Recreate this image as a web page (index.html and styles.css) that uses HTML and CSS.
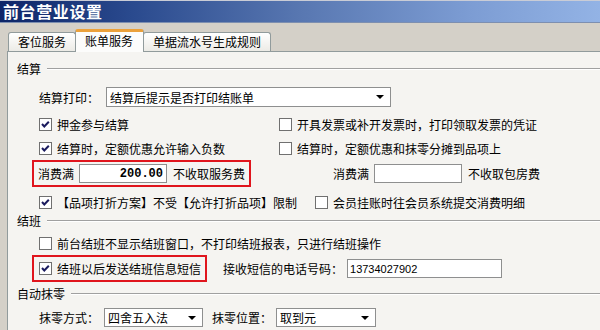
FILE: index.html
```html
<!DOCTYPE html>
<html lang="zh-CN">
<head>
  <meta charset="UTF-8">
  <title>前台营业设置</title>
  <link rel="stylesheet" href="styles.css">
</head>
<body>
  <div class="titlebar">前台营业设置</div>
  <div class="tabstrip">
    <div class="tab">客位服务</div>
    <div class="tab active">账单服务</div>
    <div class="tab">单据流水号生成规则</div>
  </div>

  <div class="panel">
    <!-- 结算 -->
    <div class="group-head head-settle"><span>结算</span></div>
    <div class="row row-print">
      <span>结算打印：</span>
      <div class="select select-print">结算后提示是否打印结账单<span class="arrow"></span></div>
    </div>
    <div class="row row-cb1">
      <label class="check col-left"><span class="box"><svg width="11" height="11" viewBox="0 0 11 11"><polyline points="2,5 4.3,7.5 8.8,2.8" fill="none" stroke="#1b1b5e" stroke-width="2"/></svg></span>押金参与结算</label>
      <label class="check"><span class="box"></span>开具发票或补开发票时，打印领取发票的凭证</label>
    </div>
    <div class="row row-cb2">
      <label class="check col-left"><span class="box"><svg width="11" height="11" viewBox="0 0 11 11"><polyline points="2,5 4.3,7.5 8.8,2.8" fill="none" stroke="#1b1b5e" stroke-width="2"/></svg></span>结算时，定额优惠允许输入负数</label>
      <label class="check"><span class="box"></span>结算时，定额优惠和抹零分摊到品项上</label>
    </div>
    <div class="row row-fee">
      <div class="highlight fee-box">
        <span>消费满</span>
        <div class="input input-fee">200.00</div>
        <span class="after-input">不收取服务费</span>
      </div>
      <span class="room-fee">消费满</span>
      <div class="input input-fee"></div>
      <span class="after-input">不收取包房费</span>
    </div>
    <div class="row row-cb3">
      <label class="check col-wide"><span class="box"><svg width="11" height="11" viewBox="0 0 11 11"><polyline points="2,5 4.3,7.5 8.8,2.8" fill="none" stroke="#1b1b5e" stroke-width="2"/></svg></span>【品项打折方案】不受【允许打折品项】限制</label>
      <label class="check"><span class="box"></span>会员挂账时往会员系统提交消费明细</label>
    </div>

    <!-- 结班 -->
    <div class="group-head head-shift"><span>结班</span></div>
    <div class="row row-cb4">
      <label class="check"><span class="box"></span>前台结班不显示结班窗口，不打印结班报表，只进行结班操作</label>
    </div>
    <div class="row row-sms">
      <div class="highlight sms-box">
        <label class="check"><span class="box"><svg width="11" height="11" viewBox="0 0 11 11"><polyline points="2,5 4.3,7.5 8.8,2.8" fill="none" stroke="#1b1b5e" stroke-width="2"/></svg></span>结班以后发送结班信息短信</label>
      </div>
      <span class="phone-label">接收短信的电话号码：</span>
      <div class="input input-phone">13734027902</div>
    </div>

    <!-- 自动抹零 -->
    <div class="group-head head-round"><span>自动抹零</span></div>
    <div class="row row-round">
      <span>抹零方式：</span>
      <div class="select select-small">四舍五入法<span class="arrow"></span></div>
      <span class="pos-label">抹零位置：</span>
      <div class="select select-small select-pos">取到元<span class="arrow"></span></div>
    </div>
  </div>
</body>
</html>
```

FILE: styles.css
```css
body {
  margin: 0;
  width: 600px;
  height: 330px;
  overflow: hidden;
  background: #d4d0c8;
  font-family: "Noto Sans CJK SC", sans-serif;
  font-size: 12px;
  color: #000;
}

.titlebar {
  height: 23px;
  box-sizing: border-box;
  border-top: 1px solid #c9ccd6;
  border-bottom: 1px solid #7d8fb0;
  background: linear-gradient(to right, #0d2568, #2a4a8e 22%, #5877b1 50%, #7c9cd3 78%, #93b3e5);
  color: #fff;
  font-size: 16px;
  font-weight: bold;
  line-height: 21px;
  padding-left: 3px;
  letter-spacing: 0.6px;
}

.tabstrip {
  height: 28px;
  box-sizing: border-box;
  display: flex;
  align-items: flex-end;
  padding-left: 8px;
}
.tab {
  height: 19px;
  box-sizing: border-box;
  border: 1px solid #919b9c;
  border-bottom: none;
  border-radius: 3px 3px 0 0;
  background: linear-gradient(#ffffff, #ecebe6);
  padding: 0 9px;
  line-height: 18px;
  white-space: nowrap;
}
.tab.active {
  height: 23px;
  margin-bottom: -1px;
  position: relative;
  border-top: 3px solid #eba13b;
  background: #fcfcfb;
  padding: 0 10px 0 9px;
  line-height: 17px;
  margin-left: -1px;
  margin-right: -1px;
}

.panel {
  margin-left: 7px;
  height: 279px;
  box-sizing: border-box;
  border-top: 1px solid #919b9c;
  border-left: 1px solid #919b9c;
  background: #f5f4f1;
  padding-left: 9px;
}

.group-head {
  display: flex;
  align-items: center;
  height: 16px;
}
.group-head::after {
  content: "";
  flex: 1;
  height: 1px;
  margin-left: 6px;
  background: #a0a0a0;
  box-shadow: 0 1px 0 #fff;
}
.head-settle { padding-top: 8px; }
.head-shift { margin-top: 2px; }
.head-round { margin-top: 3px; }

.row {
  display: flex;
  align-items: center;
  height: 16px;
  margin-left: 22px;
  white-space: nowrap;
}
.row-print { height: 20px; margin-top: 11px; }
.row-cb1 { margin-top: 9px; }
.row-cb2 { margin-top: 8px; }
.row-fee { height: 27px; margin-top: 4px; margin-left: 15px; }
.row-cb3 { margin-top: 7px; }
.row-cb4 { margin-top: 7px; }
.row-sms { height: 27px; margin-top: 4px; margin-left: 15px; }
.row-round { height: 19px; margin-top: 7px; }

.check {
  display: flex;
  align-items: center;
}
.col-left { width: 240px; }
.col-wide { width: 276px; }
.box {
  width: 13px;
  height: 13px;
  box-sizing: border-box;
  border: 1px solid #707070;
  background: #fff;
  margin-right: 5px;
  display: flex;
  align-items: center;
  justify-content: center;
}

.highlight {
  display: flex;
  align-items: center;
  height: 27px;
  box-sizing: border-box;
  border: 2px solid #e0151d;
}
.fee-box { width: 219px; padding-left: 4px; }
.sms-box { width: 175px; padding-left: 5px; }

.select, .input {
  box-sizing: border-box;
  border: 1px solid #8e8f8f;
  background: #fff;
  height: 20px;
  display: flex;
  align-items: center;
}
.select {
  padding: 0 6px 0 3px;
  margin-left: 7px;
}
.select-print { width: 285px; }
.select-small { width: 99px; height: 19px; margin-left: 5px; }
.select-pos { width: 100px; margin-left: 4px; }
.arrow {
  margin-left: auto;
  width: 0;
  height: 0;
  border-left: 4px solid transparent;
  border-right: 4px solid transparent;
  border-top: 4px solid #000;
}
.pos-label { margin-left: 9px; }

.input { height: 19px; }
.input-fee {
  width: 88px;
  margin-left: 5px;
  justify-content: flex-end;
  padding-right: 3px;
  font-family: "Liberation Mono", monospace;
  font-weight: bold;
  font-size: 12px;
}
.after-input { margin-left: 6px; }
.room-fee { margin-left: 82px; }

.phone-label { margin-left: 16px; }
.input-phone {
  width: 155px;
  margin-left: 4px;
  padding-left: 2px;
  font-family: "Liberation Sans", sans-serif;
  font-size: 11px;
}
```
